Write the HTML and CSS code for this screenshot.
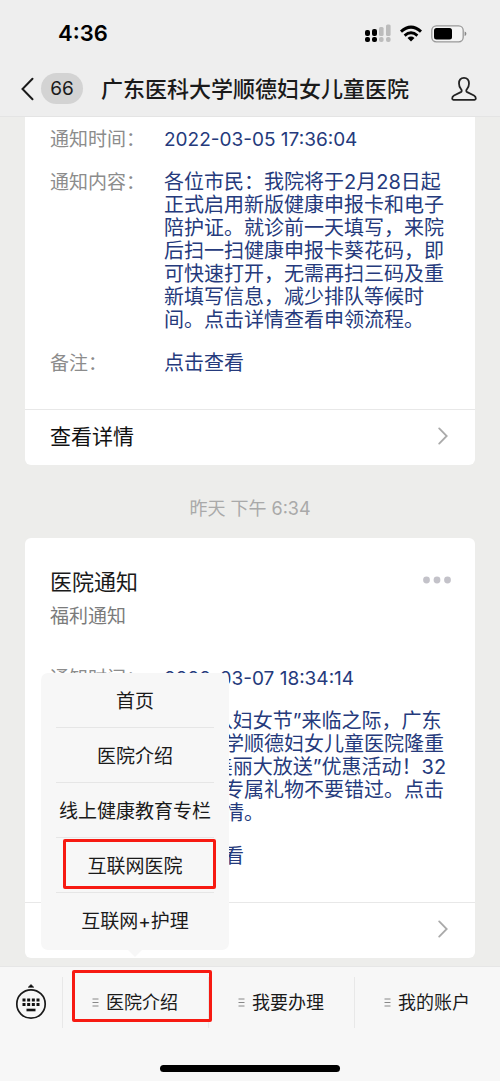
FILE: index.html
```html
<!DOCTYPE html>
<html lang="zh-CN">
<head>
<meta charset="utf-8">
<meta name="viewport" content="width=device-width, initial-scale=1">
<title>广东医科大学顺德妇女儿童医院</title>
<link rel="stylesheet" href="styles.css">
</head>
<body>
<div class="app">
  <header class="header">
    <div class="status">
      <span class="clock">4:36</span>
      <span class="indicators">
        <svg width="26" height="20" viewBox="0 0 26 20">
          <g fill="#000"><rect x="0" y="6" width="5" height="6" rx="2"/><rect x="7" y="5" width="5" height="7" rx="2"/><rect x="0" y="13" width="5" height="5" rx="2"/><rect x="7" y="13" width="5" height="5" rx="2"/></g>
          <g fill="#bcbcbc"><rect x="14" y="3" width="4.6" height="9" rx="1.5"/><rect x="21" y="0.5" width="4.6" height="11.5" rx="1.5"/><rect x="14" y="13" width="4.6" height="5" rx="2"/><rect x="21" y="13" width="4.6" height="5" rx="2"/></g>
        </svg>
        <svg width="22" height="18" viewBox="0 0 22 18" fill="none" stroke="#000">
          <path d="M1 6.6Q11 -2.4 21 6.6" stroke-width="3"/>
          <path d="M4.6 10.6Q11 5 17.4 10.6" stroke-width="2.8"/>
          <path d="M11 16.5L7.5 13Q11 10.2 14.5 13Z" fill="#000" stroke="none"/>
        </svg>
        <svg width="36" height="18" viewBox="0 0 36 18">
          <rect x="0.8" y="0.8" width="31.4" height="16" rx="4.5" fill="#f4f4f4" stroke="#999" stroke-width="1.3"/>
          <rect x="3" y="3" width="18" height="11.6" rx="2.5"/>
          <path d="M33.6 6.5Q35.4 7 35.4 8.8T33.6 11Z" fill="#888"/>
        </svg>
      </span>
    </div>
    <div class="nav">
      <button class="back" type="button" aria-label="返回">
        <svg width="13" height="24" viewBox="0 0 13 24" fill="none" stroke="#1a1a1a" stroke-width="2" stroke-linecap="round"><path d="M11.5 1.8L1.5 12L11.5 22.2"/></svg>
        <span class="unread">66</span>
      </button>
      <h1 class="title">广东医科大学顺德妇女儿童医院</h1>
      <button class="profile" type="button" aria-label="资料">
        <svg width="26" height="26" viewBox="0 0 26 26" fill="none" stroke="#222" stroke-width="1.8" stroke-linejoin="round"><path d="M13 1.8C9.8 1.8 8 4.1 8 7.4C8 9.9 8.9 12 10.2 13.3C11 14.1 10.9 15.5 9.8 16.1L3 19.5C1.6 20.2 1.2 21.3 1.2 22.6C1.2 23.4 1.6 23.8 2.4 23.8H23.6C24.4 23.8 24.8 23.4 24.8 22.6C24.8 21.3 24.4 20.2 23 19.5L16.2 16.1C15.1 15.5 15 14.1 15.8 13.3C17.1 12 18 9.9 18 7.4C18 4.1 16.2 1.8 13 1.8Z"/></svg>
      </button>
    </div>
  </header>

  <main class="chat">
    <article class="card card-cut">
      <dl class="fields">
        <dt>通知时间：</dt><dd class="date">2022-03-05 17:36:04</dd>
        <dt>通知内容：</dt><dd>各位市民：我院将于2月28日起正式启用新版健康申报卡和电子陪护证。就诊前一天填写，来院后扫一扫健康申报卡葵花码，即可快速打开，无需再扫三码及重新填写信息，减少排队等候时间。点击详情查看申领流程。</dd>
        <dt>备注：</dt><dd>点击查看</dd>
      </dl>
      <a class="more" href="#">查看详情
        <svg width="10" height="18" viewBox="0 0 10 18" fill="none" stroke="#aaa" stroke-width="1.8" stroke-linecap="round"><path d="M1.2 1.4L8.7 9L1.2 16.6"/></svg>
      </a>
    </article>
    <p class="time">昨天 下午 6:34</p>
    <article class="card">
      <div class="card-head">
        <div>
          <h2 class="card-title">医院通知</h2>
          <p class="card-sub">福利通知</p>
        </div>
        <button class="dots" type="button" aria-label="更多">
          <svg width="28" height="8" viewBox="0 0 28 8" fill="#c3c2c9"><circle cx="3.5" cy="4" r="3.4"/><circle cx="14" cy="4" r="3.4"/><circle cx="24.5" cy="4" r="3.4"/></svg>
        </button>
      </div>
      <dl class="fields">
        <dt>通知时间：</dt><dd class="date">2022-03-07 18:34:14</dd>
        <dt>通知内容：</dt><dd>在“三八妇女节”来临之际，广东医科大学顺德妇女儿童医院隆重推出“美丽大放送”优惠活动！32份女神专属礼物不要错过。点击查看详情。</dd>
        <dt>备注：</dt><dd>点击查看</dd>
      </dl>
      <a class="more" href="#">查看详情
        <svg width="10" height="18" viewBox="0 0 10 18" fill="none" stroke="#aaa" stroke-width="1.8" stroke-linecap="round"><path d="M1.2 1.4L8.7 9L1.2 16.6"/></svg>
      </a>
    </article>
  </main>

  <footer class="footer">
    <div class="tabs">
      <button class="keyboard" type="button" aria-label="键盘">
        <svg width="32" height="36" viewBox="0 0 32 36">
          <path d="M13.3 3.2L16 0.6L18.7 3.2Z" stroke="#222" stroke-width="0.8" stroke-linejoin="round"/>
          <circle cx="16" cy="20" r="14.2" fill="none" stroke="#1a1a1a" stroke-width="1.7"/>
          <path d="M7.5 16h17M7.5 20.5h17" stroke="#111" stroke-width="3" stroke-dasharray="3 1.67"/>
          <path d="M11.5 26h9" stroke="#111" stroke-width="2.6"/>
        </svg>
      </button>
      <div class="tab marked">
        <button class="tab-button" type="button" aria-expanded="true">
          <svg class="bars" width="7" height="9" viewBox="0 0 7 9" stroke="#888"><path d="M0.5 1h6M0.5 4.5h6M0.5 8h6"/></svg>医院介绍
        </button>
        <nav class="popup">
          <a href="#">首页</a>
          <a href="#">医院介绍</a>
          <a href="#">线上健康教育专栏</a>
          <a class="marked" href="#">互联网医院</a>
          <a href="#">互联网+护理</a>
        </nav>
      </div>
      <div class="tab">
        <button class="tab-button" type="button">
          <svg class="bars" width="7" height="9" viewBox="0 0 7 9" stroke="#888"><path d="M0.5 1h6M0.5 4.5h6M0.5 8h6"/></svg>我要办理
        </button>
      </div>
      <div class="tab">
        <button class="tab-button" type="button">
          <svg class="bars" width="7" height="9" viewBox="0 0 7 9" stroke="#888"><path d="M0.5 1h6M0.5 4.5h6M0.5 8h6"/></svg>我的账户
        </button>
      </div>
    </div>
    <div class="home"></div>
  </footer>
</div>
</body>
</html>
```
FILE: styles.css
```css
* {
  box-sizing: border-box;
  margin: 0;
  padding: 0;
}

body {
  background: #ededeb;
  color: #1a1a1a;
  font-family: Inter, "Noto Sans CJK SC", sans-serif;
  font-size: 19px;
  line-height: 23px;
}

button {
  border: 0;
  background: none;
  color: inherit;
  font: inherit;
  cursor: pointer;
}

a {
  color: inherit;
  text-decoration: none;
}

svg {
  display: block;
  flex: none;
}

.app {
  display: flex;
  flex-direction: column;
  min-height: 100vh;
}

/* Status bar and title */
.header {
  background: #eee;
  border-bottom: 1px solid #e4e4e4;
}

.status {
  display: flex;
  align-items: center;
  justify-content: space-between;
  height: 61px;
  padding: 6px 33px 0 58px;
}

.clock {
  color: #000;
  font-size: 22px;
  font-weight: 600;
}

.indicators {
  display: flex;
  align-items: center;
  gap: 9px;
}

.nav {
  display: flex;
  align-items: center;
  height: 55px;
  padding: 0 23px 0 21px;
}

.back {
  display: flex;
  align-items: center;
  gap: 7px;
}

.unread {
  width: 42px;
  border-radius: 16px;
  background: #d3d3d3;
  line-height: 31px;
}

.title {
  flex: 1;
  padding-left: 18px;
  font-size: 22px;
  font-weight: 500;
  line-height: 32px;
  white-space: nowrap;
}

/* Messages */
.chat {
  flex: 1;
  padding: 0 25px 8px;
}

.card {
  border-radius: 6px;
  background: #fff;
}

.card-cut {
  padding-top: 11px;
  border-radius: 0 0 6px 6px;
}

.card-head {
  display: flex;
  align-items: flex-start;
  justify-content: space-between;
  padding: 28px 24px 37px 25px;
}

.card-title {
  font-size: 22px;
  font-weight: 400;
  line-height: 32px;
}

.card-sub {
  padding-top: 6px;
  color: #7b7b7b;
  line-height: 26px;
}

.dots {
  padding-top: 10px;
}

.fields {
  display: grid;
  grid-template-columns: 114px 1fr;
  row-gap: 20px;
  padding: 0 28px 34px 25px;
}

.fields dt {
  color: #8c8c8c;
}

.fields dd {
  color: #253a7c;
  font-size: 20px;
}

.fields .date {
  font-size: 19px;
}

.more {
  display: flex;
  align-items: center;
  justify-content: space-between;
  height: 56px;
  padding: 0 27px 3px 25px;
  border-top: 1px solid #e8e8e8;
  color: #111;
  font-size: 21px;
}

.time {
  padding: 31px 0 16px;
  color: #a9a9a9;
  font-size: 18px;
  line-height: 26px;
  text-align: center;
}

/* Bottom menu */
.footer {
  border-top: 1px solid #e6e6e6;
  background: #f7f7f7;
}

.tabs {
  display: flex;
}

.keyboard {
  width: 62px;
  padding: 17px 15px 18px;
}

.tab {
  position: relative;
  flex: 1;
}

.tab::before {
  content: "";
  position: absolute;
  top: 10px;
  bottom: 10px;
  left: 0;
  border-left: 1px solid #e8e8e8;
}

.tab-button {
  display: flex;
  align-items: center;
  justify-content: center;
  gap: 7px;
  width: 100%;
  height: 71px;
  font-size: 18px;
}

.home {
  width: 180px;
  height: 7px;
  margin: 27px auto 10px;
  border-radius: 4px;
  background: #000;
}

.popup {
  position: absolute;
  right: -21px;
  bottom: calc(100% + 17px);
  left: -21px;
  padding: 0 15px 3px;
  border-radius: 7px;
  background: #f7f7f7;
  text-align: center;
}

.popup::after {
  content: "";
  position: absolute;
  top: 100%;
  left: 50%;
  margin-left: -7px;
  border: 7px solid transparent;
  border-top-color: #f7f7f7;
  border-bottom: 0;
}

.popup a {
  display: block;
  position: relative;
  padding-top: 3px;
  border-bottom: 1px solid #e6e6e6;
  line-height: 51px;
  white-space: nowrap;
}

.popup a:last-child {
  border-bottom: 0;
}

/* Red guide frames */
.marked::after {
  content: "";
  position: absolute;
  border: 3px solid #f71a12;
  border-radius: 2px;
  pointer-events: none;
}

.tab.marked::after {
  inset: 3px -4px 16px 10px;
  z-index: 1;
}

.popup .marked::after {
  inset: 1px -2px 3px 7px;
}
```
